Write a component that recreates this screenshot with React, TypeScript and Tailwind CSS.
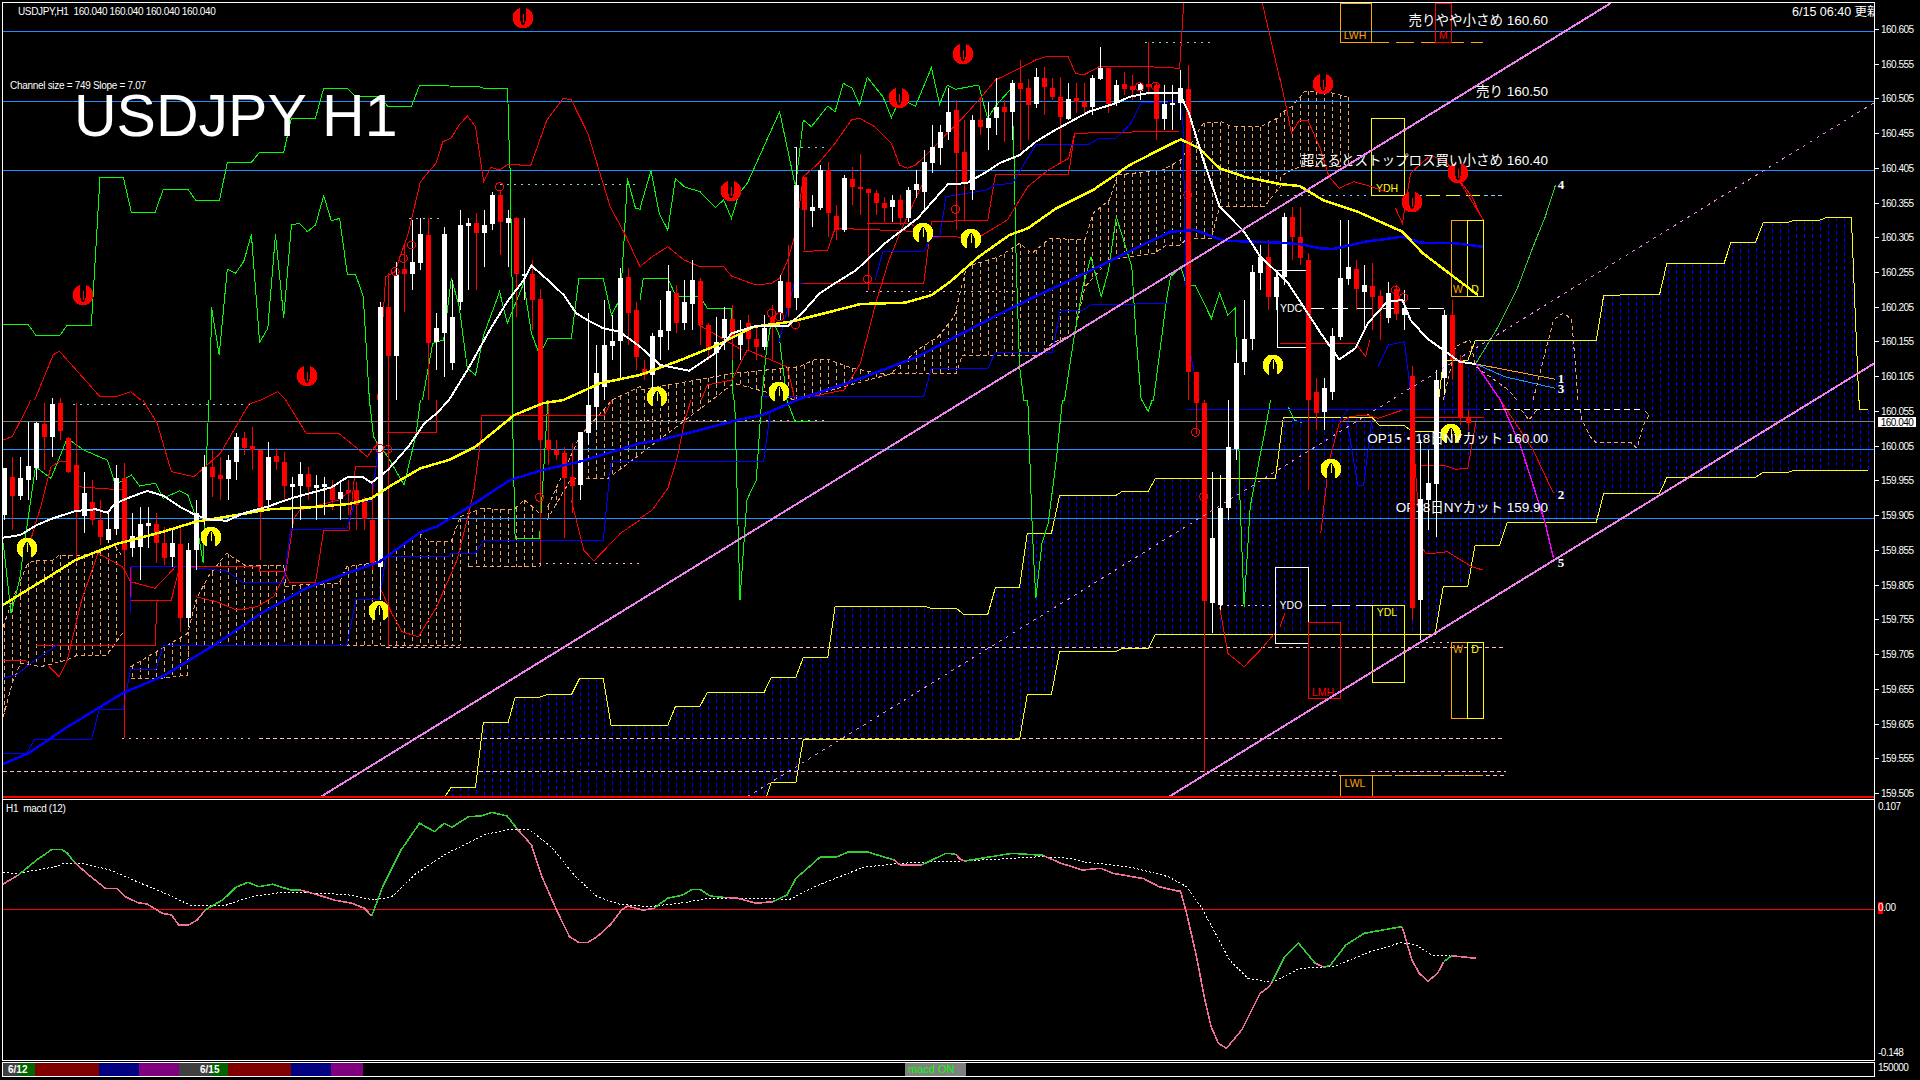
import { FC } from "react";

type Pt = number[];
type Series = { c: string; w?: number; d?: string; pts: Pt[] };

// chart points were read off six 640px wide crops, so they are kept in crop units
const regions: Record<string, number[]> = {
	A: [0, 0],
	B: [640, 0],
	C: [1280, 0],
	D: [0, 400],
	E: [640, 400],
	F: [1280, 400],
};

const p = (r: string, s: string): Pt[] =>
	s
		.trim()
		.split(/\s+/)
		.map((item) => {
			const [a, b] = item.split(",").map(Number);
			return [regions[r][0] + a / 2.45, regions[r][1] + b / 3];
		});

const macdPt = (ox: number, s: string): Pt[] =>
	s
		.trim()
		.split(/\s+/)
		.map((item) => {
			const [a, b] = item.split(",").map(Number);
			return [ox + a / 1.633, 780 + b / 3];
		});

const str = (pts: Pt[]) => pts.map((q) => `${q[0].toFixed(1)},${q[1].toFixed(1)}`).join(" ");

const interp = (pts: Pt[], x: number) => {
	if (x <= pts[0][0]) return pts[0][1];
	for (let i = 1; i < pts.length; i++) {
		if (x <= pts[i][0]) {
			const t = (x - pts[i - 1][0]) / (pts[i][0] - pts[i - 1][0] || 1);
			return pts[i - 1][1] + (pts[i][1] - pts[i - 1][1]) * t;
		}
	}
	return pts[pts.length - 1][1];
};

const kumoTop: Pt[] = [
	...p("D", "1090,1190 1105,1162 1165,1162 1184,967 1245,967 1262,892 1322,892 1340,884 1400,884 1420,835 1478,835 1497,976"),
	...p("E", "0,976 68,976 87,919 147,919 165,877 304,877 322,832 382,832 400,772 460,772 478,620 700,620 712,625 775,625 793,643 852,643 871,562 930,562 949,400 1008,400 1028,287 1165,287 1182,274 1245,274 1263,235 1557,235"),
	...p("F", "0,130 8,52 225,52 243,75 303,75 322,93 380,93"),
	...p("C", "400,1082 460,1082 478,1022 775,1022 793,886 930,883 948,790 1088,790 1105,727 1165,727 1184,667 1245,667 1260,661 1322,661 1340,652 1400,652 1408,900 1418,1200"),
	...p("F", "1420,0 1421,28 1440,30"),
];

const kumoBottom: Pt[] = [
	[440, 797],
	...p("E", "310,1190 322,1147 382,1147 400,1017 930,1017 949,883 1008,883 1028,754 1168,754 1182,745 1245,745 1263,703"),
	...p("F", "0,703 380,703 400,558 460,558 478,436 538,436 557,367 775,367 793,280 930,280 948,232 1165,232 1184,217 1245,217 1260,211 1440,211"),
];

const sandClouds: { top: Pt[]; bottom: Pt[]; from: number; to: number }[] = [
	{
		top: p("D", "8,680 30,600 68,490 88,480 130,480 145,465 205,465 240,460 262,440 280,435 300,470"),
		bottom: p("D", "8,950 30,850 50,790 100,800 165,780 185,768 262,765 300,700"),
		from: 4,
		to: 124,
	},
	{
		top: p("D", "320,800 460,700 480,600 510,530 555,460 600,495 695,495 700,560 735,555 830,550 850,500 910,490 945,470 1030,400 1050,425 1105,425 1128,350"),
		bottom: p("D", "320,835 400,835 460,825 461,735 1128,735"),
		from: 132,
		to: 460,
	},
	{
		top: p("D", "1128,350 1180,325 1245,330 1262,325 1285,300 1322,340"),
		bottom: p("D", "1148,500 1322,500"),
		from: 468,
		to: 540,
	},
	{
		top: [...p("D", "1342,320 1420,110"), ...p("A", "1500,1200 1568,1160"), ...p("B", "0,1170 230,1120 390,1100 430,1078 460,1078 520,1105 610,1125 680,1050 730,1010 770,950 800,800 880,770 930,730 960,760 1005,715 1090,720 1110,640 1150,600 1170,525 1280,510 1325,480 1380,370 1425,365 1450,380 1520,380 1568,350"), ...p("C", "0,340 28,320 60,275 105,272 165,290")],
		bottom: [...p("D", "1340,360 1400,235 1490,235"), ...p("B", "230,1150 380,1200 620,1120 775,1120 790,1065 980,1065 1010,1030 1065,1000 1090,860 1150,780 1260,760 1290,735 1325,735 1340,715 1400,715 1420,620 1530,620 1568,560"), ...p("C", "0,530 28,510 50,500 165,500")],
		from: 548,
		to: 1348,
	},
];

const thin: Series[] = [
	// green
	{ c: "#00ff00", pts: p("A", "7,972 68,972 88,1006 147,1006 165,975 224,975 245,532 302,532 322,637 380,637 400,568 460,568 480,601 538,601 557,487 616,487 636,457 695,457 714,354 773,354 793,265 851,265 871,289 930,289 950,319 1008,319 1028,256 1100,258 1170,259 1185,265 1244,265 1245,350 1250,520 1255,860 1255,1200") },
	{ c: "#00ff00", pts: p("D", "1255,0 1262,415 1322,415 1324,370 1335,150 1342,0") },
	{ c: "#00ff00", pts: [...p("A", "1035,1200 1060,1030 1087,1020 1106,835 1125,920 1145,1105 1165,1125 1185,1005 1224,875 1243,970 1283,850 1302,1000 1322,1065 1342,1015 1400,1015 1418,835 1478,835 1498,945 1520,895 1530,700 1537,535 1557,625 1568,628"), ...p("B", "0,625 27,512 47,640 68,690 87,535 108,560 147,575 185,622 205,600 224,655 243,580 263,550 342,335 381,560 400,360 420,380 460,318 478,335 498,250 520,265 538,315 557,232 595,290 616,353 636,297 675,318 714,203 734,312 753,255 773,268 830,255 840,305 852,355 871,318 908,268 915,400 922,800 930,1100 940,1200"), ...p("E", "950,0 960,350 965,490 970,595 985,430 1000,370 1020,180 1035,0"), ...p("B", "1040,1200 1065,1000 1085,860 1105,770 1130,890 1148,810 1167,650 1205,800 1215,1000 1228,1200"), ...p("E", "1230,0 1245,35 1255,0"), ...p("B", "1258,1200 1290,900 1300,830 1325,800 1340,860 1360,855 1400,955 1420,880 1440,945 1458,925 1465,1200"), ...p("E", "1465,0 1470,300 1480,620 1495,320 1530,100 1545,0")] },
	{ c: "#00ff00", pts: p("D", "8,430 27,640 48,540 68,360 87,200 125,235 165,115 205,150 243,170 263,180 283,255 322,225 342,258 381,250 400,295 440,272 460,285 478,345 498,490 505,200 512,0") },
	{ c: "#00ff00", pts: p("A", "515,1200 518,920 537,1065 557,808 577,820 597,785 616,703 636,1027 656,985 675,703 695,953 714,675 734,670 753,695 773,675 793,587 812,663 832,655 851,823 871,823 890,890 905,1200") },
	{ c: "#00ff00", pts: p("D", "905,0 915,110 930,140 950,170 990,255 1020,100 1030,0") },
	{ c: "#00ff00", pts: p("B", "0,900 8,835 68,835 88,888 147,888 165,925 225,925 228,1200") },
	{ c: "#00ff00", pts: p("E", "232,0 245,600 262,300 285,240 298,0") },
	{ c: "#00ff00", pts: p("B", "298,1200 310,1050 322,960 340,1000 360,1200") },
	{ c: "#00ff00", pts: p("E", "360,0 380,65 418,65") },
	{ c: "#00ff00", pts: p("F", "20,20 35,60 55,68") },
	// red bands and steps
	{ c: "#ff0000", pts: p("A", "85,1200 130,1065 145,1053 205,1135 245,1190 285,1190 320,1175 345,1200") },
	{ c: "#ff0000", pts: p("A", "640,1200 680,1175 700,1200") },
	{ c: "#ff0000", pts: [...p("A", "925,1200 945,830 968,815 1000,700 1030,545 1068,490 1085,425 1105,415 1125,375 1145,348 1165,380 1185,545 1203,502 1224,510 1245,493 1300,497 1340,360 1380,295 1400,300 1440,400 1470,520 1495,620 1530,700 1568,800"), ...p("B", "0,800 30,770 68,740 108,780 147,800 205,800 224,828 283,855 322,850 342,835 362,780 381,700 400,530 437,490 478,430 518,360 538,355 575,380 616,430 636,495 655,505 675,495 714,450 753,400 793,350 830,300 871,240 930,205 969,180 1000,168 1048,168 1067,220 1087,225 1125,200 1243,200 1322,205 1332,10")] },
	{ c: "#ff0000", pts: [...p("B", "1525,10 1568,240"), ...p("C", "0,235 15,320 28,400 48,360 68,360 100,450 120,530 145,565 180,545 210,555 260,575")] },
	{ c: "#ff0000", pts: p("C", "283,625 300,670 320,520 370,465 410,490 470,590 497,660") },
	{ c: "#ff0000", pts: p("D", "7,120 30,110 68,20 75,0") },
	{ c: "#ff0000", pts: p("D", "350,0 385,70 420,215 475,230 540,160 610,12 640,0") },
	{ c: "#ff0000", pts: p("D", "700,0 750,100 830,100 900,170 930,120") },
	{ c: "#ff0000", pts: p("D", "480,590 530,605 580,630 630,620 670,590 700,520 720,355 735,330 830,300 860,270") },
	{ c: "#ff0000", pts: p("D", "70,440 100,320 125,200 145,185 165,185") },
	{ c: "#ff0000", pts: p("D", "949,97 1070,97 1070,0") },
	{ c: "#ff0000", pts: p("D", "1180,46 1400,46 1480,46 1500,0") },
	{ c: "#ff0000", pts: p("D", "120,800 145,830 165,780 200,600 240,460 300,500 320,545 380,565 415,520 430,500") },
	{ c: "#ff0000", pts: p("D", "320,500 320,600 420,600 440,500 635,500 635,513 695,513 710,548 773,548 793,390 855,390 871,200 925,200") },
	{ c: "#ff0000", pts: p("D", "87,735 380,735 385,600") },
	{ c: "#ff0000", pts: p("D", "0,780 60,780 70,790") },
	{ c: "#ff0000", pts: p("D", "190,330 190,260 300,270") },
	{ c: "#ff0000", pts: p("D", "930,560 960,640 985,695 1025,710 1070,620 1120,480 1160,280 1180,100 1180,46") },
	{ c: "#ff0000", pts: p("D", "1400,300 1430,450 1455,483 1520,400 1568,360") },
	{ c: "#ff0000", pts: [...p("B", "380,1200 500,1170 540,1090 580,900 610,780 640,690"), ...p("B", "640,690 700,530")] },
	{ c: "#ff0000", pts: p("E", "0,355 30,330 68,265 90,180 110,60 125,0") },
	{ c: "#ff0000", pts: p("E", "1420,620 1440,760 1480,800 1520,750 1555,700") },
	{ c: "#ff0000", pts: p("F", "0,680 12,640") },
	{ c: "#ff0000", pts: p("F", "100,400 120,185 145,70 170,50 210,45 240,55 300,30") },
	{ c: "#ff0000", pts: p("F", "320,0 345,440 360,462 410,455 470,500 497,510") },
	{ c: "#ff0000", pts: p("F", "345,195 400,195 430,208 460,205 480,65") },
	{ c: "#ff0000", pts: p("F", "320,52 500,52") },
	{ c: "#ff0000", pts: p("B", "380,850 695,850 714,665 852,660 871,523 1050,523 1065,400 1240,395 1322,393") },
	{ c: "#ff0000", pts: p("B", "400,755 460,750 478,685 695,695") },
	{ c: "#ff0000", pts: p("B", "555,670 660,670 720,710 830,712 900,660 950,560 1000,510 1050,475 1065,400") },
	{ c: "#ff0000", pts: p("B", "150,1200 165,1155 225,1140 263,1050 340,1090 360,1100 380,1200") },
	{ c: "#ff0000", pts: p("B", "145,975 250,1050") },
	{ c: "#ff0000", pts: p("C", "0,1030 68,1030 185,1030 210,1070 220,1020") },
	{ c: "#ff0000", pts: p("C", "420,505 498,660") },
	// thin blue
	{ c: "#0000ff", pts: [...p("D", "7,1060 65,1060 85,1018 225,1018 243,928 302,928 320,808 382,808 400,735 850,735 872,598 930,598 945,470 1100,470 1105,460 1165,460 1185,420 1478,420 1497,185"), ...p("E", "0,185 303,185 320,30")] },
	{ c: "#0000ff", pts: p("D", "320,640 323,500 450,500 555,513 595,548 695,548 712,390 850,385 870,305 910,305 930,120") },
	{ c: "#0000ff", pts: p("D", "7,835 40,825 88,778 140,735") },
	{ c: "#0000ff", pts: p("B", "300,1190 695,1190 714,1105 852,1105 871,1057 1010,1057 1030,930 1085,930 1105,915 1295,910") },
	{ c: "#0000ff", pts: p("B", "340,1027 378,850 400,850") },
	{ c: "#0000ff", pts: p("B", "576,840 595,755 695,755 714,712 734,712 750,590 850,570 870,555 913,550 970,433 1100,433 1125,415 1165,415 1200,375 1228,308 1322,305 1330,360 1340,1000 1370,1200") },
	{ c: "#0000ff", pts: p("F", "165,65 190,255 205,255 225,60") },
	{ c: "#0000ff", pts: p("C", "240,1100 265,1035 305,1025 322,1200") },
	{ c: "#0000ff", pts: [[1187, 409.5], [1480, 409.5]] },
	{ c: "#0000ff", pts: p("F", "30,65 145,65 165,30") },
	// forecast lines
	{ c: "#32cd32", pts: p("C", "480,1090 530,990 580,870 620,740 650,650 675,555") },
	{ c: "#ffa500", pts: p("C", "480,1092 675,1138") },
	{ c: "#1e90ff", pts: p("C", "480,1092 550,1130 675,1165") },
	{ c: "#ff0000", pts: p("F", "540,0 620,150 670,280") },
	{ c: "#ff0000", pts: p("C", "480,1092 540,1200") },
	{ c: "#ff00ff", w: 1.4, pts: [...p("C", "480,1092 540,1200"), ...p("F", "540,0 590,140 650,370 670,475")] },
	// future cloud outline
	{ c: "#f4a460", d: "4 3", pts: p("C", "400,1200 430,1040 465,1020 480,1100 560,1170 580,1200") },
	{ c: "#f4a460", d: "4 3", pts: p("C", "620,1200 670,960 695,938 715,960 730,1200") },
	{ c: "#f4a460", d: "4 3", pts: p("F", "540,28 590,28 610,60 630,28") },
	{ c: "#f4a460", d: "4 3", pts: p("F", "735,28 740,60 760,110 775,128 860,128 875,145 890,75 905,45 890,28") },
	{ c: "#ffffff", d: "6 4", pts: p("F", "500,28 890,28") },
];

// x, colour, body top, body bottom, wick top, wick bottom
const candleRows = `4 W 468 515 468 520|12 R 477 496 457 530|20 W 478 496 457 500|28 W 466 480 422 500|36 W 423 468 422 480|44 R 424 437 403 470|52 W 404 437 398 457|60 R 403 431 398 440|68 R 438 472 437 473|76 R 465 510 403 563|84 W 493 516 472 533|92 R 502 520 480 525|100 R 520 537 500 545|108 W 529 540 513 543|116 W 478 529 465 535|124 R 478 550 463 738|132 W 536 548 513 557|140 W 524 547 507 580|148 W 523 526 507 548|156 R 524 543 513 563|164 R 543 558 527 565|172 W 543 557 530 567|180 R 544 618 527 632|188 W 550 618 543 627|196 W 513 550 500 570|204 W 467 517 455 525|212 R 467 477 450 497|220 R 475 479 457 500|228 W 460 479 455 500|236 W 437 462 433 480|244 R 438 448 432 455|252 R 446 450 427 470|260 R 450 507 450 560|268 W 457 500 442 510|276 R 456 462 448 470|284 R 462 486 452 500|292 W 484 487 477 528|300 W 474 486 462 520|308 R 474 487 467 500|316 W 485 488 475 520|324 W 484 487 477 515|332 R 487 500 480 510|340 W 492 499 483 520|348 R 490 493 480 515|356 R 490 505 482 530|364 R 502 519 497 530|372 R 520 563 480 570|380 W 307 567 302 600|388 R 307 356 273 647|396 W 275 356 262 400|404 R 269 274 243 312|412 W 262 274 220 290|420 W 234 263 218 270|428 R 235 343 218 400|436 W 328 342 313 370|444 W 234 333 227 377|452 W 317 363 280 370|460 W 225 302 210 310|468 W 223 226 218 290|476 R 223 233 213 290|484 W 225 233 210 267|492 W 195 224 192 230|500 R 195 222 190 255|508 W 218 223 210 267|516 R 218 274 217 317|524 W 274 276 218 300|532 R 274 300 260 330|540 R 299 440 289 563|548 R 440 450 400 465|556 R 450 455 440 460|564 R 453 478 447 538|572 R 477 486 443 513|580 W 432 485 432 500|588 W 405 433 313 445|596 W 373 407 345 430|604 W 345 387 300 400|612 W 341 346 315 360|620 W 278 341 268 380|628 R 277 313 268 345|636 R 310 357 302 370|644 R 369 375 360 380|652 W 336 375 333 400|660 W 330 337 300 360|668 W 291 331 265 350|676 R 293 323 285 333|684 W 302 323 280 330|692 W 280 304 260 330|700 R 281 325 278 345|708 R 325 350 323 360|716 W 342 353 317 383|724 W 319 338 307 350|732 R 319 337 305 360|740 W 333 345 320 360|748 R 323 339 315 350|756 R 339 347 325 360|764 W 328 347 315 350|772 R 317 325 305 360|780 W 281 313 275 320|788 R 282 308 245 317|796 W 185 298 147 310|804 R 177 210 177 250|812 W 207 211 195 227|820 W 170 208 165 210|828 R 170 213 162 237|836 R 216 230 205 240|844 W 178 230 175 232|852 R 179 187 167 205|860 R 187 189 154 215|868 R 189 193 189 290|876 R 193 203 190 215|884 R 203 208 197 222|892 W 200 207 195 222|900 R 200 218 195 225|908 W 190 218 187 222|916 W 184 190 170 198|924 W 162 192 150 210|932 W 147 163 125 173|940 W 132 148 125 165|948 W 112 132 88 140|956 R 110 153 100 230|964 R 152 183 120 220|972 W 120 190 115 200|980 R 120 127 97 135|988 W 118 128 102 150|996 W 107 118 78 135|1004 R 107 112 100 142|1012 W 83 112 80 140|1020 R 83 89 60 150|1028 R 88 105 79 140|1036 W 77 104 68 108|1044 R 78 87 67 115|1052 R 88 97 78 100|1060 R 97 117 77 162|1068 W 99 119 83 120|1076 R 98 102 83 113|1084 R 102 107 83 113|1092 W 78 107 75 115|1100 W 68 79 47 80|1108 R 68 104 68 113|1116 W 85 103 80 106|1124 R 84 89 72 95|1132 R 86 90 75 100|1140 W 84 91 82 100|1148 R 84 87 42 95|1156 R 85 119 83 140|1164 W 104 119 85 130|1172 W 103 105 85 130|1180 W 88 103 70 120|1188 R 89 372 65 400|1196 R 372 403 372 434|1204 R 403 601 400 773|1212 W 538 603 472 633|1220 W 508 605 475 610|1228 W 447 508 400 520|1236 W 363 449 350 460|1244 W 339 362 300 375|1252 W 272 339 265 350|1260 W 257 273 245 290|1268 R 257 297 240 310|1276 W 277 297 270 310|1284 W 217 277 213 285|1292 R 217 237 207 260|1300 R 237 258 207 265|1308 R 260 400 253 490|1316 R 392 413 378 430|1324 W 388 412 378 430|1332 W 336 392 328 400|1340 W 278 337 220 340|1348 W 267 279 220 285|1356 R 269 289 260 310|1364 W 285 292 265 330|1372 R 286 297 263 330|1380 R 296 309 290 340|1388 W 293 318 282 323|1396 R 289 314 285 320|1404 W 308 315 290 330|1412 R 376 608 366 620|1420 W 499 600 440 640|1428 W 483 500 450 530|1436 W 380 484 370 537|1444 W 315 378 310 395|1452 R 315 360 300 380|1460 R 360 418 355 425|1468 R 417 423 410 430`;

const candles = candleRows.split("|").map((row) => {
	const [x, c, bt, bb, wt, wb] = row.split(" ");
	return { x: +x, up: c === "W", bt: +bt, bb: +bb, wt: +wt, wb: +wb };
});

const redMarks = [[523, 18], [83, 295], [307, 376], [963, 54], [899, 98], [731, 191], [1323, 84], [1412, 202], [1458, 173]];
const yellowMarks = [[27, 548], [211, 537], [379, 611], [923, 233], [971, 239], [779, 392], [657, 397], [1273, 365], [1331, 469], [1451, 434]];

const rings = [
	...p("A", "968,815 988,775 1008,735 1224,560"),
	...p("D", "930,145 950,148 1322,292"),
	...p("B", "322,940 342,950 381,975 557,837 773,628 1224,260 1263,258 1342,585"),
	...p("E", "1361,97 1381,290"),
	...p("C", "283,870 303,893"),
];

const hLines = [31, 101.5, 170, 449, 518];

const dashed: { x1: number; x2: number; y: number; c: string; d: string }[] = [
	{ x1: 386, x2: 1505, y: 647, c: "#ffc0cb", d: "4 3" },
	{ x1: 122, x2: 251, y: 738, c: "#ffc0cb", d: "2 5" },
	{ x1: 259, x2: 1505, y: 738, c: "#ffc0cb", d: "4 3" },
	{ x1: 3, x2: 1338, y: 771.5, c: "#ffc0cb", d: "4 3" },
	{ x1: 1371, x2: 1506, y: 771.5, c: "#ffc0cb", d: "4 3" },
	{ x1: 1220, x2: 1506, y: 775.5, c: "#ffc0cb", d: "4 3" },
	{ x1: 539, x2: 640, y: 563, c: "#ffc0cb", d: "2 5" },
	{ x1: 640, x2: 828, y: 420, c: "#ffc0cb", d: "2 5" },
	{ x1: 866, x2: 1020, y: 291, c: "#ffc0cb", d: "2 5" },
	{ x1: 1220, x2: 1275, y: 605, c: "#ffc0cb", d: "2 5" },
	{ x1: 1419, x2: 1451, y: 642, c: "#ffc0cb", d: "2 5" },
	{ x1: 500, x2: 640, y: 184, c: "#87ceeb", d: "2 5" },
	{ x1: 409, x2: 443, y: 218, c: "#87ceeb", d: "2 5" },
	{ x1: 73, x2: 251, y: 404, c: "#87ceeb", d: "2 5" },
	{ x1: 794, x2: 827, y: 147, c: "#87ceeb", d: "2 5" },
	{ x1: 1145, x2: 1211, y: 42, c: "#87ceeb", d: "2 5" },
	{ x1: 1280, x2: 1426, y: 195, c: "#87ceeb", d: "2 5" },
	{ x1: 1426, x2: 1484, y: 195, c: "#ffff00", d: "14 6" },
	{ x1: 1484, x2: 1504, y: 195, c: "#87ceeb", d: "4 3" },
	{ x1: 1371, x2: 1483, y: 42, c: "#ffa500", d: "18 7" },
	{ x1: 1372, x2: 1483, y: 775, c: "#ffa500", d: "20 4" },
	{ x1: 1308, x2: 1372, y: 605, c: "#ffffff", d: "18 6" },
	{ x1: 1308, x2: 1450, y: 308, c: "#ffffff", d: "16 8" },
];

const boxes: { x: number; y: number; w: number; h: number; c: string }[] = [
	{ x: 1340, y: 3, w: 31, h: 39, c: "#ffa500" },
	{ x: 1435, y: 3, w: 16, h: 39, c: "#ff0000" },
	{ x: 1371, y: 118, w: 33, h: 77, c: "#ffff00" },
	{ x: 1451, y: 220, w: 16, h: 76, c: "#ffa500" },
	{ x: 1467, y: 220, w: 16, h: 76, c: "#ffff00" },
	{ x: 1277, y: 270, w: 31, h: 77, c: "#ffffff" },
	{ x: 1275, y: 567, w: 33, h: 76, c: "#ffffff" },
	{ x: 1308, y: 622, w: 32, h: 76, c: "#ff0000" },
	{ x: 1372, y: 605, w: 32, h: 77, c: "#ffff00" },
	{ x: 1451, y: 642, w: 16, h: 76, c: "#ffa500" },
	{ x: 1467, y: 642, w: 16, h: 76, c: "#ffff00" },
	{ x: 1340, y: 775, w: 32, h: 22, c: "#ffa500" },
];

const boxLabels: [string, number, number, string][] = [
	["LWH", 1355, 39, "#ffa500"],
	["M", 1443, 39, "#ff0000"],
	["YDH", 1387, 192, "#ffff00"],
	["W", 1458, 293, "#ffa500"],
	["D", 1475, 293, "#ffff00"],
	["YDC", 1291, 312, "#ffffff"],
	["YDO", 1291, 609, "#ffffff"],
	["LMH", 1323, 696, "#ff0000"],
	["YDL", 1387, 616, "#ffff00"],
	["W", 1458, 653, "#ffa500"],
	["D", 1475, 653, "#ffff00"],
	["LWL", 1355, 787, "#ffa500"],
];

const noteLabels: [string, number][] = [
	["売りやや小さめ 160.60", 20],
	["売り 160.50", 91],
	["超えるとストップロス買い小さめ 160.40", 160],
	["OP15・18日NYカット 160.00", 438],
	["OP18日NYカット 159.90", 507],
];

const forecastLabels: [string, number][] = [["4", 184], ["1", 378], ["3", 388], ["2", 494], ["5", 562]];

const macdPink = "#f0709c";
const macdGreen = "#32cd32";
const macdLines: Series[] = [
	{ c: macdPink, pts: macdPt(0, "5,312 30,285") },
	{ c: macdGreen, pts: macdPt(0, "30,285 60,240 85,208 100,208 110,220 122,248") },
	{ c: macdPink, pts: macdPt(0, "122,248 145,285 172,325 190,325 205,350 225,368 240,372 265,400 280,405 292,435 308,435 322,420 335,390") },
	{ c: macdGreen, pts: macdPt(0, "335,390 365,358 385,322 405,307 422,320 445,313 475,330 490,330") },
	{ c: macdPink, pts: macdPt(0, "490,330 520,345 545,360 575,370 595,385 607,408") },
	{ c: macdGreen, pts: macdPt(0, "607,408 625,320 655,210 685,130 710,155 725,130 738,142 765,110 785,108 803,97 828,108 845,148") },
	{ c: macdPink, pts: macdPt(0, "845,148 868,195 885,290 910,395 930,470 945,487 960,487 975,470 998,432 1015,390 1025,378 1050,391 1068,385") },
	{ c: macdGreen, pts: macdPt(0, "1068,385 1090,355 1115,345 1130,328 1143,328 1160,348 1180,352") },
	{ c: macdPink, pts: macdPt(0, "1180,352 1205,355 1235,370 1262,365") },
	{ c: macdGreen, pts: macdPt(0, "1262,365 1285,345 1300,295 1340,230 1365,232 1385,216 1415,215 1460,240") },
	{ c: macdPink, pts: macdPt(0, "1460,240 1470,255 1505,255") },
	{ c: macdGreen, pts: macdPt(0, "1505,255 1545,220 1560,222") },
	{ c: macdPink, pts: [...macdPt(0, "1560,222 1568,238"), ...macdPt(960, "8,243")] },
	{ c: macdGreen, pts: macdPt(960, "8,243 35,235 85,220 135,226") },
	{ c: macdPink, pts: macdPt(960, "135,226 165,250 200,270 230,265 250,280 300,296 325,320 355,333 360,333 370,400 385,520 400,660 410,740 422,790 435,805 460,750 490,640 505,620 510,605") },
	{ c: macdGreen, pts: macdPt(960, "510,605 530,530 553,490 580,550") },
	{ c: macdPink, pts: macdPt(960, "580,550 595,562") },
	{ c: macdGreen, pts: macdPt(960, "595,562 605,555 630,495 660,460 690,450 722,440") },
	{ c: macdPink, pts: macdPt(960, "722,440 738,540 750,580 764,604 780,580 790,545") },
	{ c: macdGreen, pts: macdPt(960, "790,545 803,527") },
	{ c: macdPink, pts: macdPt(960, "803,527 842,535") },
];

const macdSignal = [
	...macdPt(0, "5,278 30,280 60,270 90,260 105,250 140,252 180,270 230,310 270,340 310,375 370,375 410,350 460,337 530,340 570,345 610,360 640,350 680,280 730,220 790,165 830,148 865,150 900,200 940,290 975,350 1010,372 1060,380 1120,367 1150,357 1210,355 1290,358 1330,320 1410,262 1470,250 1530,245 1568,243"),
	...macdPt(960, "60,238 130,230 180,235 200,245 280,262 340,290 370,320 395,385 420,470 440,540 470,595 510,607 555,565 610,560 670,515 720,488 745,495 770,525 840,532"),
];

const priceLabels = ["160.605", "160.555", "160.505", "160.455", "160.405", "160.355", "160.305", "160.255", "160.205", "160.155", "160.105", "160.055", "160.005", "159.955", "159.905", "159.855", "159.805", "159.755", "159.705", "159.655", "159.605", "159.555", "159.505"];

const bars = Array.from({ length: 235 }, (_, i) => 4 + i * 8);

const Line: FC<{ s: Series }> = ({ s }) => (
	<polyline points={str(s.pts)} fill="none" stroke={s.c} strokeWidth={s.w ?? 1} strokeDasharray={s.d} />
);

const Mark: FC<{ x: number; y: number; up?: boolean }> = ({ x, y, up }) => (
	<g transform={`translate(${x} ${y})`}>
		<ellipse rx="10.5" ry="10.5" fill={up ? "#ffff00" : "#ff0000"} />
		{up ? (
			<path d="M-4 11H4V3Q4-3 0-6Q-4-3-4 3Z" fill="#000" />
		) : (
			<path d="M-3-11H3V-1Q3 5 0 8Q-3 5-3-1Z" fill="#000" />
		)}
		<rect x="-0.5" y={up ? -5 : -4} width="1" height="9" fill={up ? "#ffff00" : "#ff0000"} />
	</g>
);

const MainChart: FC = () => (
	<svg className="block" width="1871" height="796" viewBox="3 3 1871 796" shapeRendering="crispEdges">
		{bars.map((x) => {
			if (x < 445 || x > 1868) return null;
			const t = interp(kumoTop, x);
			const b = interp(kumoBottom, x);
			if (t >= b) return null;
			return <line key={x} x1={x} x2={x} y1={t} y2={b} stroke="#0000ff" strokeDasharray="4 3" />;
		})}
		{sandClouds.map((cloud, i) => (
			<g key={i}>
				{bars
					.filter((x) => x >= cloud.from && x <= cloud.to)
					.map((x) => (
						<line
							key={x}
							x1={x}
							x2={x}
							y1={interp(cloud.top, x)}
							y2={interp(cloud.bottom, x)}
							stroke="#f4a460"
							strokeDasharray="4 3"
						/>
					))}
				<polyline points={str(cloud.top)} fill="none" stroke="#f4a460" strokeDasharray="4 3" />
				<polyline points={str(cloud.bottom)} fill="none" stroke="#f4a460" strokeDasharray="4 3" />
			</g>
		))}
		<polyline points={str(kumoTop)} fill="none" stroke="#ffff00" />
		<polyline points={str(kumoBottom.slice(1))} fill="none" stroke="#ffff00" />
		{hLines.map((y) => (
			<line key={y} x1="3" x2="1874" y1={y} y2={y} stroke="#1e90ff" />
		))}
		<line x1="3" x2="1874" y1="421" y2="421" stroke="#808080" />
		{dashed.map((l, i) => (
			<line key={i} x1={l.x1} x2={l.x2} y1={l.y} y2={l.y} stroke={l.c} strokeDasharray={l.d} />
		))}
		{boxes.map((b, i) => (
			<rect key={i} x={b.x + 0.5} y={b.y + 0.5} width={b.w} height={b.h} fill="none" stroke={b.c} />
		))}
		{boxLabels.map(([t, x, y, c], i) => (
			<text key={i} x={x} y={y} fill={c} textAnchor="middle" fontSize="10.5" fontFamily="'Liberation Sans', sans-serif">
				{t}
			</text>
		))}
		{thin.map((s, i) => (
			<Line key={i} s={s} />
		))}
		{redMarks.map(([x, y], i) => (
			<Mark key={i} x={x} y={y} />
		))}
		{yellowMarks.map(([x, y], i) => (
			<Mark key={i} x={x} y={y} up />
		))}
		{noteLabels.map(([t, y]) => (
			<text
				key={t}
				x="1548"
				y={y + 5}
				fill="#fff"
				textAnchor="end"
				fontSize="13.5"
				fontFamily="'Liberation Sans', 'Noto Sans CJK JP', sans-serif"
			>
				{t}
			</text>
		))}
		{candles.map((k) => (
			<g key={k.x}>
				<rect x={k.x} y={k.wt} width="1" height={k.wb - k.wt} fill={k.up ? "#fff" : "#f00"} />
				<rect x={k.x - 2} y={k.bt} width="5" height={Math.max(k.bb - k.bt, 2)} fill={k.up ? "#fff" : "#f00"} />
			</g>
		))}
		{rings.map((r, i) => (
			<circle key={i} cx={r[0]} cy={r[1]} r="4" fill="none" stroke="#f00" />
		))}
		<Line s={{ c: "#0000ff", w: 2.5, pts: p("D", "7,1092 70,1060 160,985 240,925 300,880 400,828 525,735 640,640 750,565 850,520 930,485 1030,397 1070,380 1150,320 1250,240 1330,210 1420,185 1568,130").concat(p("E", "50,120 140,92 240,60 300,45 385,0"), p("B", "530,1140 680,1070 860,955 950,900 1090,820 1240,730 1300,695 1360,690 1430,722 1568,728"), p("C", "50,733 100,745 130,747 210,725 300,710 345,728 430,730 497,740")) }} />
		<Line s={{ c: "#ffff00", w: 2.5, pts: p("D", "7,615 60,575 120,530 185,480 285,432 400,395 480,365 555,350 660,328 760,322 855,312 910,295 960,255 1030,205 1100,180 1165,140 1260,45 1330,10").concat(p("A", "1380,1200 1470,1150 1568,1125"), p("B", "100,1080 190,1035 280,980 370,965 500,925 540,912 650,908 715,885 760,845 830,770 905,705 950,685 1020,625 1110,570 1200,495 1280,445 1325,418 1370,445 1420,505 1480,530 1568,552"), p("C", "48,558 105,600 190,635 300,695 350,760 420,825 485,885")) }} />
		<Line s={{ c: "#ffffff", w: 2, pts: p("D", "7,413 50,405 90,375 130,355 185,333 235,328 263,338 283,310 322,290 361,273 400,287 440,320 479,345 518,360 557,362 596,340 655,320 714,295 773,275 812,262 851,232 890,232 910,248 950,210 1000,140 1040,70 1070,40").concat(p("A", "1100,1200 1150,1100 1200,990 1243,905 1283,840 1302,797 1342,840 1381,885 1412,940 1439,960 1478,985 1518,995 1568,1040"), p("B", "50,1095 120,1112 185,1060 225,1000 283,978 362,978 400,935 440,880 480,848 530,810 600,730 680,655 755,552 800,550 850,515 880,490 930,465 970,425 1010,395 1050,368 1100,335 1165,310 1200,290 1243,280 1322,280 1345,340 1380,480 1420,620 1480,695 1520,770 1568,825"), p("C", "20,850 68,940 100,1000 145,1078 185,1045 215,970 263,905 300,900 320,960 360,1015 400,1050 440,1085 480,1092")) }} />
		<line x1="320.4" y1="797" x2="1611" y2="3" stroke="#ee82ee" strokeWidth="2" />
		<line x1="1168.6" y1="797" x2="1874" y2="363.5" stroke="#ee82ee" strokeWidth="2" />
		<line x1="747" y1="797" x2="1874" y2="102.7" stroke="#ee82ee" strokeDasharray="3 5" />
		{forecastLabels.map(([t, y]) => (
			<text key={t} x="1561" y={y + 5} fill="#fff" textAnchor="middle" fontSize="13" fontWeight="700" fontFamily="'Liberation Serif', serif">
				{t}
			</text>
		))}
		<rect x="3" y="796" width="1871" height="1.5" fill="#ff0000" />
		<text x="74" y="136" fill="#fff" fontSize="59" fontFamily="'Liberation Sans', sans-serif">
			USDJPY H1
		</text>
	</svg>
);

const MacdChart: FC = () => (
	<svg className="block" width="1871" height="260" viewBox="3 800 1871 260" shapeRendering="crispEdges">
		<line x1="3" x2="1874" y1="909.5" y2="909.5" stroke="#ff0000" />
		<polyline points={str(macdSignal)} fill="none" stroke="#fff" strokeDasharray="2 2" />
		{macdLines.map((s, i) => (
			<Line key={i} s={{ ...s, w: 1.6 }} />
		))}
	</svg>
);

const App: FC = () => {
	return (
		<div className="flex h-[1080px] w-[1920px] overflow-hidden bg-black text-white font-['Liberation_Sans',sans-serif]">
			<div className="flex w-[1875px] flex-col pl-[2px] pt-[2px]">
				<div className="relative h-[798px] border border-white">
					<MainChart />
					<div className="absolute left-[15px] top-[3px] whitespace-pre text-[10px] leading-[12px] tracking-[-0.35px]">
						USDJPY,H1  160.040 160.040 160.040 160.040
					</div>
					<div className="absolute left-[7px] top-[77px] text-[10px] leading-[12px] tracking-[-0.3px]">
						Channel size = 749 Slope = 7.07
					</div>
					<div className="absolute right-0 top-[2px] w-[84px] overflow-hidden whitespace-nowrap pl-[2px] font-['Liberation_Sans','Noto_Sans_CJK_JP',sans-serif] text-[12.5px] leading-[14px]">
						6/15 06:40 更新
					</div>
				</div>
				<div className="relative h-[261px] border-x border-b border-white">
					<MacdChart />
					<div className="absolute left-[3px] top-[3px] whitespace-pre text-[10px] leading-[12px] tracking-[-0.3px]">H1  macd (12)</div>
				</div>
				<div className="mt-px flex h-[15px] items-stretch border border-white text-[10px] font-bold leading-[13px]">
					<div className="relative z-10 w-[15px] whitespace-nowrap bg-[#404040] pl-[5px]">6/12</div>
					<div className="w-[17px] bg-[#006400]" />
					<div className="w-[64px] bg-[#800000]" />
					<div className="w-[40px] bg-[#000080]" />
					<div className="w-[40px] bg-[#800080]" />
					<div className="relative z-10 w-[32px] whitespace-nowrap bg-[#404040] pl-[21px]">6/15</div>
					<div className="w-[17px] bg-[#006400]" />
					<div className="w-[63px] bg-[#800000]" />
					<div className="w-[40px] bg-[#000080]" />
					<div className="w-[32px] bg-[#800080]" />
					<div className="w-[542px]" />
					<div className="w-[61px] overflow-hidden whitespace-nowrap bg-[#808080] pl-[3px] text-[11px] font-normal text-[#00ff00]">macd ON</div>
				</div>
			</div>
			<div className="relative w-[45px] text-[10px] tracking-[-0.5px]">
				<div className="h-[800px] pt-[12px]">
					{priceLabels.map((t) => (
						<div key={t} className="flex h-[34.74px] items-center">
							<div className="h-px w-[4px] bg-white" />
							<span className="ml-[2px]">{t}</span>
						</div>
					))}
				</div>
				<div className="absolute left-[3px] top-[417px] flex h-[10px] w-[38px] items-center justify-center bg-white text-black">160.040</div>
				<div className="ml-[3px] pt-[1px] leading-[12px]">0.107</div>
				<div className="ml-[3px] mt-[89px] flex h-[12px] items-center leading-[12px]">
					<span className="bg-[#ff0000]">0</span>.00
				</div>
				<div className="ml-[3px] mt-[133px] leading-[12px]">-0.148</div>
				<div className="ml-[3px] mt-[3px] leading-[12px]">150000</div>
			</div>
		</div>
	);
};

export default App;
